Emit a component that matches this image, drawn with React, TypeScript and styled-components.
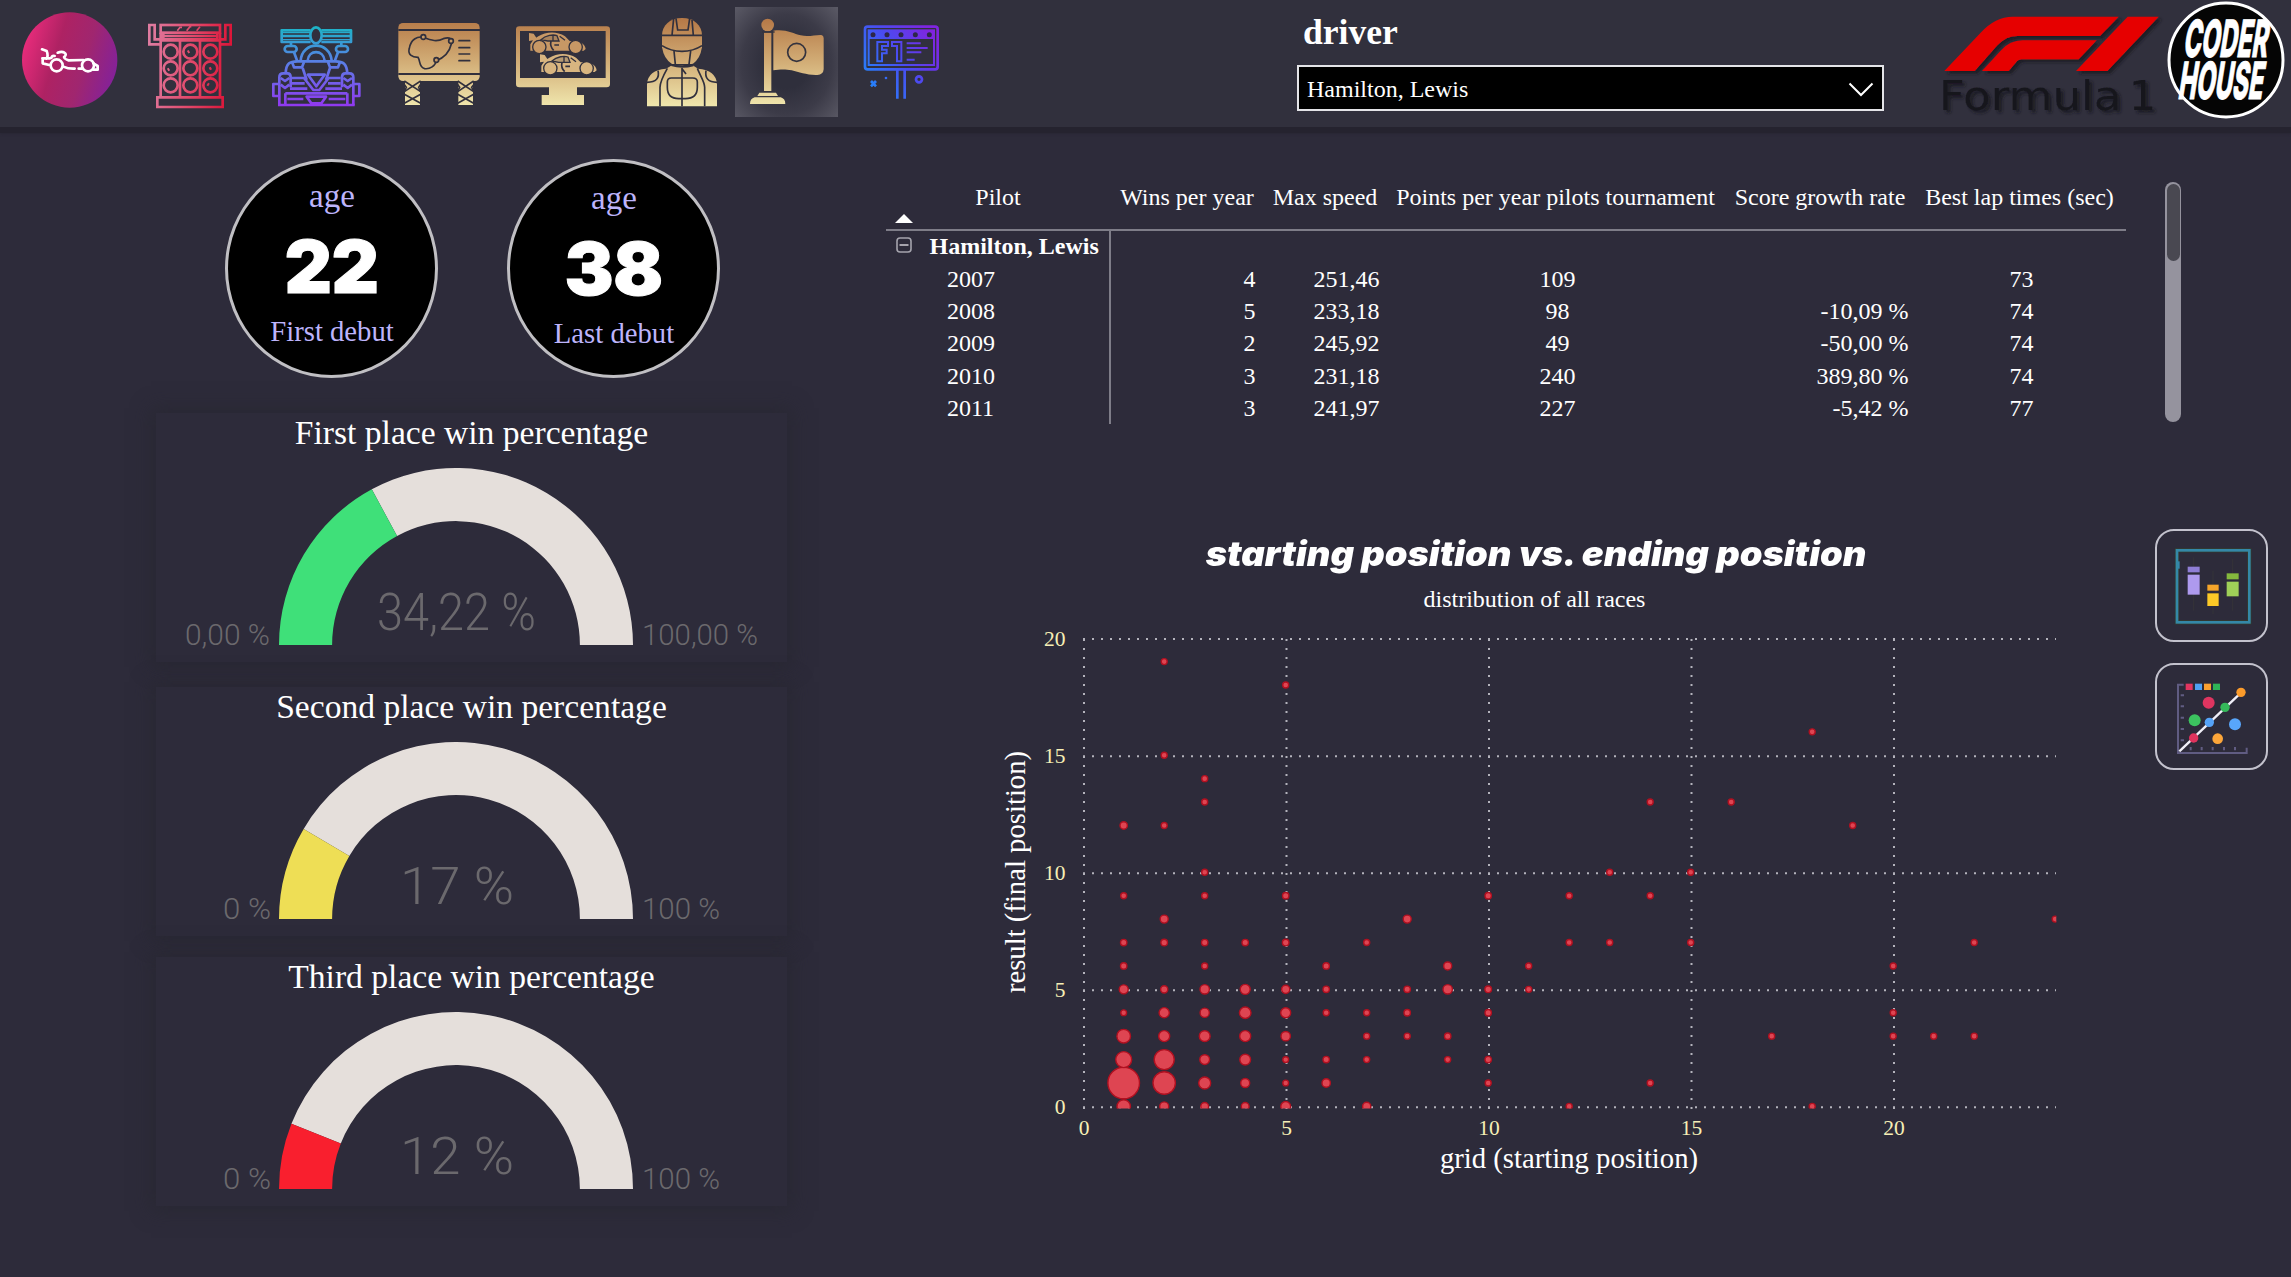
import React from "react";
import styled, { createGlobalStyle } from "styled-components";

const PAGE = "#2d2b3a";
const SERIF = '"Liberation Serif", "Times New Roman", serif';
const HEAVY = 'Inter, "Liberation Sans", sans-serif';
const DIN = 'Roboto, "Liberation Sans", sans-serif';

const GlobalStyle = createGlobalStyle`
  *, *::before, *::after { box-sizing: border-box; }
  body { margin: 0; background: ${PAGE}; }
  svg { display: block; flex: none; }
`;

const Page = styled.div`
  width: 2291px;
  height: 1277px;
  overflow: hidden;
  display: flex;
  flex-direction: column;
  background: ${PAGE};
  color: #fff;
  font-family: ${SERIF};
`;

const Header = styled.header`
  height: 133px;
  flex: none;
  display: flex;
  align-items: flex-start;
  background: #31303d;
  border-bottom: 6px solid #25232f;
  box-shadow: 0 0 3px #25232f;
`;

const Nav = styled.nav`
  display: flex;
  align-items: flex-start;
  width: 1297px;
`;

const ActiveTile = styled.div`
  width: 103px;
  height: 110px;
  margin: 7px 22px 0 5px;
  background: radial-gradient(ellipse at 50% 52%, #2f2f3c 30%, #3c3b48 62%, #5b5a66 100%);
`;

const DriverFilter = styled.div`
  width: 587px;
  padding-top: 11px;
  margin-right: 16px;
`;

const FilterLabel = styled.div`
  height: 54px;
  padding-left: 6px;
  font-size: 35.6px;
  font-weight: 700;
  line-height: 42px;
`;

const Select = styled.div`
  height: 46px;
  display: flex;
  align-items: center;
  justify-content: space-between;
  padding: 2px 8px 0 8px;
  border: 2px solid #e4e4e8;
  background: #000;
  font-size: 24px;
  line-height: 40px;
`;

const Body = styled.main`
  flex: 1;
  display: flex;
`;

const LeftColumn = styled.section`
  width: 886px;
  padding: 26px 0 0 156px;
`;

const Kpis = styled.div`
  display: flex;
  gap: 69px;
  padding-left: 69px;
  margin-bottom: 35px;
`;

const Kpi = styled.div<{ $drop: number }>`
  width: 213px;
  height: 219px;
  border: 3.5px solid #c0bfc3;
  border-radius: 50%;
  background: #000;
  display: flex;
  flex-direction: column;
  align-items: center;
  padding-top: ${(p) => 15 + p.$drop}px;
`;

const KpiLabel = styled.div<{ $size: number; $height: number }>`
  color: #bdb4fb;
  font-size: ${(p) => p.$size}px;
  line-height: ${(p) => p.$height}px;
  padding-left: 1px;
  white-space: nowrap;
`;

const KpiValue = styled.div`
  font-family: ${HEAVY};
  font-weight: 900;
  font-size: 73.5px;
  line-height: 104px;
  height: 99px;
  letter-spacing: -0.5px;
  -webkit-text-stroke: 1px #fff;
`;

const Cards = styled.div`
  display: flex;
  flex-direction: column;
`;

const Card = styled.article<{ $gap: number }>`
  width: 631px;
  height: 249px;
  margin-bottom: ${(p) => p.$gap}px;
  background: ${PAGE};
  box-shadow: 0 0 18px 5px rgba(38, 38, 47, 0.6);
`;

const CardTitle = styled.h2`
  margin: 0;
  height: 55px;
  padding-top: 1px;
  font-size: 33.6px;
  font-weight: 400;
  line-height: 38px;
  text-align: center;
  white-space: nowrap;
`;

const RightColumn = styled.section`
  flex: 1;
  display: flex;
  flex-direction: column;
`;

const MatrixArea = styled.div`
  display: flex;
  height: 340px;
  padding-top: 31px;
`;

const Matrix = styled.div`
  width: 1240px;
  font-size: 24px;
  white-space: nowrap;
`;

const HEAD_COLUMNS = "224px 154px 122px 339px 190px 209px";
const COLUMNS = "225px 153px 124px 339px 190px 209px";

const MatrixHead = styled.div`
  display: grid;
  grid-template-columns: ${HEAD_COLUMNS};
  height: 67px;
  padding-top: 19px;
  border-bottom: 2px solid #7e7d88;
  line-height: 28px;
  text-align: center;
  position: relative;
`;

const SortMark = styled.svg`
  position: absolute;
  left: 9px;
  top: 50px;
`;

const MatrixRow = styled.div<{ $first?: boolean }>`
  display: grid;
  grid-template-columns: ${COLUMNS};
  height: ${(p) => (p.$first ? 32 : 32.2)}px;
  line-height: ${(p) => (p.$first ? 30.6 : 32.2)}px;
`;

const RowHead = styled.div<{ $bold?: boolean }>`
  display: flex;
  align-items: center;
  padding-left: ${(p) => (p.$bold ? 10 : 61)}px;
  padding-bottom: ${(p) => (p.$bold ? 2 : 0)}px;
  font-weight: ${(p) => (p.$bold ? 700 : 400)};
  border-right: 2px solid #7e7d88;
  svg { margin: -2px 17.5px 0 0; }
`;

const Cell = styled.div<{ $align: "right" | "center" }>`
  text-align: ${(p) => p.$align};
  padding-right: ${(p) => (p.$align === "right" ? 8.5 : 0)}px;
`;

const ScrollTrack = styled.div`
  width: 16px;
  height: 240px;
  margin: 18px 0 0 39px;
  border-radius: 8px;
  background: #95939e;
  padding: 1.5px;
`;

const ScrollThumb = styled.div`
  height: 77px;
  border-radius: 7px;
  background: #494851;
`;

const ChartArea = styled.div`
  display: flex;
  flex: 1;
  padding: 56px 0 0 104px;
`;

const ChartPanel = styled.div`
  width: 1092px;
`;

const ChartTitle = styled.h1`
  margin: 0;
  height: 56px;
  font-family: ${HEAVY};
  font-size: 34px;
  font-style: italic;
  font-weight: 900;
  line-height: 49px;
  text-align: center;
  white-space: nowrap;
  transform: scaleX(1.071);
`;

const ChartSubtitle = styled.div`
  height: 40px;
  padding-right: 3px;
  font-size: 24px;
  line-height: 28px;
  text-align: center;
`;

const SideButtons = styled.div`
  display: flex;
  flex-direction: column;
  gap: 21px;
  margin-left: 73px;
`;

const SideButton = styled.button<{ $height: number }>`
  width: 113px;
  height: ${(p) => p.$height}px;
  padding: 0 3px 0 0;
  border: 2px solid #c3c2cd;
  border-radius: 19px;
  background: transparent;
  display: flex;
  align-items: center;
  justify-content: center;
`;

/* ---------- header icons ---------- */

const GoldGradient = ({ id }: { id: string }) => (
  <linearGradient id={id} gradientUnits="userSpaceOnUse" x1="0" y1="60" x2="0" y2="320">
    <stop offset="0" stopColor="#b67a48" />
    <stop offset="0.5" stopColor="#d3af78" />
    <stop offset="1" stopColor="#f0e7ae" />
  </linearGradient>
);

const CarBadge = () => (
  <svg width="132" height="120" viewBox="0 0 396 360">
    <defs>
      <linearGradient id="badge" x1="0" y1="0.35" x2="1" y2="0.65">
        <stop offset="0" stopColor="#ea2c7c" />
        <stop offset="0.35" stopColor="#ae2263" />
        <stop offset="0.65" stopColor="#a0266f" />
        <stop offset="1" stopColor="#83219b" />
      </linearGradient>
    </defs>
    <circle cx="209" cy="180" r="143" fill="url(#badge)" />
    <g fill="none" stroke="#fff" strokeWidth="8" strokeLinejoin="round" strokeLinecap="round">
      <circle cx="170" cy="196" r="18" />
      <circle cx="264" cy="196" r="18" />
      <path d="M126 148 L140 153 Q146 168 139 176 M127 175 H150 M164 168 Q156 166 154 174 M128 176 V190 L148 195" />
      <path d="M173 158 Q186 153 193 158 Q202 164 192 171 Q194 178 206 181 L250 180 M190 200 Q205 207 224 206 M236 206 H246 M280 190 L293 198 V209 H280" />
    </g>
  </svg>
);

const TrafficLights = () => (
  <svg width="123" height="120" viewBox="396 0 369 360">
    <defs>
      <linearGradient id="lights" gradientUnits="userSpaceOnUse" x1="445" y1="180" x2="695" y2="200">
        <stop offset="0" stopColor="#df7ba0" />
        <stop offset="0.5" stopColor="#e24a6c" />
        <stop offset="1" stopColor="#dc1235" />
      </linearGradient>
    </defs>
    <g fill="none" stroke="url(#lights)" strokeWidth="8">
      <rect x="482" y="75" width="178" height="23" />
      <path d="M490 98 V118 H652 V98 M490 108 H652" />
      <path d="M482 133 H448 V75 H464 V118 H482 M660 133 H692 V75 H676 V118 H660" />
      <path d="M482 98 V290 M660 98 V290 M540 120 V290 M600 120 V290 M482 121 H660" />
      <path d="M532 92 l8 -10 h6 M560 92 l10 -12 h4 M590 92 l10 -12" strokeWidth="5" />
      {[155, 205, 256].map((y) =>
        [512, 571, 631].map((x) => <circle key={`${x}-${y}`} cx={x} cy={y} r="21" />)
      )}
      <path d="M563 157 l5 -3 M503 210 l5 -3 M628 207 l6 -3 M622 252 l5 3" strokeWidth="9" />
      <path d="M472 292 H668 V321 H472 Z" />
    </g>
  </svg>
);

const FrontCar = () => (
  <svg width="125" height="120" viewBox="765 0 375 360">
    <defs>
      <linearGradient id="front" gradientUnits="userSpaceOnUse" x1="0" y1="80" x2="0" y2="318">
        <stop offset="0" stopColor="#1cb4c6" />
        <stop offset="0.45" stopColor="#5a7ee6" />
        <stop offset="1" stopColor="#9138f0" />
      </linearGradient>
    </defs>
    <g fill="none" stroke="url(#front)" strokeWidth="8" strokeLinejoin="round">
      <path d="M932 91 H845 V126 H932 M845 108 H930 M964 91 H1053 V126 H964 M966 108 H1053" />
      <path d="M845 98 H930 M845 119 H930 M966 98 H1053 M966 119 H1053" strokeWidth="4" />
      <ellipse cx="948" cy="106" rx="17" ry="24" />
      <path d="M873 127 V138 M1024 127 V138 M882 157 L892 184 M1014 157 L1004 184" />
      <rect x="854" y="138" width="36" height="18" rx="9" />
      <rect x="1008" y="138" width="36" height="18" rx="9" />
      <path d="M902 182 C906 122 990 122 995 182 M923 182 C926 148 970 148 974 182" />
      <path d="M857 220 C858 190 870 184 892 184 H1006 C1030 184 1040 192 1042 220" />
      <path d="M876 186 L882 202 H906 L912 186 M984 186 L990 202 H1014 L1020 186" />
      <path d="M924 224 H974 L949 259 Z M908 204 L920 240 M990 204 L978 240" />
      <path d="M838 316 V232 Q838 220 850 220 H862 Q872 220 872 232 V262 M1060 316 V232 Q1060 220 1048 220 H1036 Q1026 220 1026 232 V262" />
      <path d="M836 252 H820 V288 H836 M1062 252 H1078 V288 H1062" />
      <path d="M842 234 L855 243 L868 234 M842 254 L855 264 L868 254 M1030 234 L1043 243 L1056 234 M1030 254 L1043 264 L1056 254" />
      <path d="M876 234 H912 L940 270 H958 L986 234 H1022 M876 250 H914 M984 250 H1022 M870 266 H922 M976 266 H1026 M856 280 H1042 M856 280 V314 M1042 280 V314 M862 297 H910 M986 297 H1036 M920 290 H978 L964 310 H934 Z M834 315 H1064" />
    </g>
  </svg>
);

const CircuitBoard = () => (
  <svg width="120" height="120" viewBox="1140 0 360 360">
    <defs><GoldGradient id="gold-board" /></defs>
    <rect x="1195" y="69" width="244" height="174" rx="14" fill="url(#gold-board)" />
    <path fill="url(#gold-board)" d="M1215 243 H1260 V315 H1215 Z M1375 243 H1419 V315 H1375 Z" />
    <g fill="none" stroke="#31303d" strokeWidth="5">
      <path d="M1195 90 H1440 M1195 222 H1440" strokeWidth="6" />
      <path d="M1228 145 C1232 118 1252 108 1270 112 C1295 122 1312 126 1330 116 C1350 110 1362 118 1354 132 C1348 158 1335 172 1309 182 C1306 198 1290 208 1274 206 C1256 202 1262 184 1254 172 C1236 172 1222 164 1228 145 Z" />
      <path d="M1377 122 H1409 M1377 143 H1409 M1377 162 H1409 M1377 182 H1409" strokeLinecap="round" />
      <g fill="#c99b66"><circle cx="1270" cy="111" r="7" /><circle cx="1353" cy="123" r="7" /><circle cx="1309" cy="180" r="7" /></g>
      <path d="M1213 243 L1262 275 M1262 243 L1213 275 M1213 283 L1262 310 M1262 283 L1213 310 M1373 243 L1421 275 M1421 243 L1373 275 M1373 283 L1421 310 M1421 283 L1373 310" />
      <path d="M1208 247 L1219 262 L1208 284 M1266 247 L1256 262 L1266 284 M1368 247 L1379 262 L1368 284 M1427 247 L1415 262 L1427 284" />
    </g>
  </svg>
);

const SmallCar = ({ x, y, tone }: { x: number; y: number; tone: string }) => (
  <g transform={`translate(${x} ${y})`}>
    <path fill={tone} d="M0 0 L14 2 L22 14 L16 18 L28 10 C50 -4 84 -6 108 10 L122 24 C150 24 168 30 170 48 L164 53 H4 V34 L12 22 L0 24 Z" />
    <g fill="none" stroke="#31303d" strokeWidth="4">
      <path d="M36 20 C50 6 74 4 84 8 L90 24 H56 Z M72 8 V24 M92 10 L108 22" fill="#31303d" fillOpacity="0.2" />
      <path d="M76 36 h14 M66 24 Q62 40 74 52" strokeWidth="5" />
      <circle cx="31" cy="42" r="20" fill={tone} />
      <circle cx="140" cy="42" r="20" fill={tone} />
    </g>
  </g>
);

const RaceScreen = () => (
  <svg width="130" height="120" viewBox="60 0 390 360">
    <defs><GoldGradient id="gold-screen" /></defs>
    <path fill="url(#gold-screen)" fillRule="evenodd" d="M118 79 H380 Q390 79 390 89 V252 Q390 262 380 262 H291 V285 H312 V315 H185 V285 H207 V262 H118 Q108 262 108 252 V89 Q108 79 118 79 Z M120 93 V234 H377 V93 Z" />
    <SmallCar x={147} y={99} tone="#c79865" />
    <SmallCar x={180} y={163} tone="#d8b580" />
  </svg>
);

const Pilot = () => (
  <svg width="100" height="120" viewBox="450 0 300 360">
    <defs><GoldGradient id="gold-pilot" /></defs>
    <g fill="url(#gold-pilot)">
      <path d="M546 106 C546 76 570 54 606 54 C642 54 666 76 666 106 V142 Q660 178 638 192 H576 Q552 178 546 142 Z" />
      <path d="M576 196 H638 L654 206 Q708 210 711 252 V319 H501 V252 Q504 210 558 206 Z" />
    </g>
    <g fill="none" stroke="#31303d" strokeWidth="5">
      <path d="M546 106 H666 M581 55 L576 106 M588 55 L593 90 H624 L629 55 M636 60 L640 106" />
      <path d="M546 137 C566 150 580 154 606 154 C632 154 646 150 666 137 M582 153 L586 193 M632 153 L627 193" />
      <path d="M574 195 Q606 204 640 195" strokeWidth="7" />
      <path d="M606 204 V319 M606 206 L618 222 M562 205 C548 230 540 245 540 262 V319 M652 205 C662 230 674 245 674 262 V319" />
      <path d="M606 234 H574 Q562 234 562 246 V262 Q562 296 596 296 H616 Q652 296 652 262 V246 Q652 234 638 234 Z" />
      <path d="M534 212 Q542 246 501 247 M678 212 Q672 246 711 247" />
    </g>
  </svg>
);

const FinishFlag = () => (
  <svg width="103" height="110" viewBox="765 21 309 330">
    <defs><GoldGradient id="gold-flag" /></defs>
    <g fill="url(#gold-flag)">
      <circle cx="863" cy="75" r="19" />
      <rect x="852" y="98" width="22" height="175" />
      <path d="M838 278 H888 L894 288 H832 Z M824 292 H902 Q916 296 916 312 H810 Q810 296 824 292 Z" />
      <path d="M880 92 C915 86 940 100 962 106 C985 112 1006 104 1024 105 Q1031 106 1031 114 V208 Q1030 224 1012 225 C980 226 958 216 935 211 C912 206 896 209 880 211 Z" />
    </g>
    <circle cx="950" cy="157" r="27" fill="none" stroke="#34333e" strokeWidth="5" />
    <path d="M846 96 H884" stroke="#34333e" strokeWidth="4" />
  </svg>
);

const Billboard = () => (
  <svg width="85" height="120" viewBox="1140 0 255 360">
    <defs>
      <linearGradient id="sign" gradientUnits="userSpaceOnUse" x1="1150" y1="230" x2="1350" y2="90">
        <stop offset="0" stopColor="#2583fa" />
        <stop offset="0.5" stopColor="#4a4cf0" />
        <stop offset="1" stopColor="#8024e0" />
      </linearGradient>
    </defs>
    <g fill="none" stroke="url(#sign)" strokeWidth="8">
      <rect x="1155" y="80" width="218" height="128" rx="8" />
      <rect x="1166" y="91" width="196" height="104" strokeWidth="6" />
      <path d="M1166 104 H1362" strokeWidth="26" />
      <path d="M1192 184 V126 H1224 V138 H1206 V149 H1220 V160 H1206 V184 Z M1236 138 V126 H1264 V184 H1251 V138 Z" strokeWidth="6" />
      <path d="M1280 130 H1322 M1280 144 H1343 M1280 157 H1324 M1280 179 H1304" strokeWidth="6" />
      <path d="M1252 210 V296 M1274 210 V296 M1173 243 L1188 259 M1188 243 L1173 259" />
      <circle cx="1317" cy="238" r="9" />
      <circle cx="1218" cy="234" r="2" strokeWidth="4" />
    </g>
    <g fill="#2d2748">
      {[1179, 1221, 1263, 1306, 1348].map((x) => <circle key={x} cx={x} cy="104" r="7.5" />)}
    </g>
  </svg>
);

const Logos = () => (
  <svg width="391" height="120" viewBox="0 0 1173 360">
    <defs>
      <filter id="logo-shadow" x="-10%" y="-10%" width="125%" height="130%">
        <feDropShadow dx="9" dy="8" stdDeviation="4" floodColor="#14131a" floodOpacity="0.85" />
      </filter>
    </defs>
    <g fill="#e60400" filter="url(#logo-shadow)">
      <path d="M133 213 L242 98 Q286 50 338 50 H656 L600 108 H352 Q318 108 292 136 L224 213 Z" />
      <path d="M246 213 L302 152 Q330 121 368 121 H590 L536 178 H366 Q355 178 347 188 L326 213 Z" />
      <path d="M528 213 L683 50 H776 L622 213 Z" />
    </g>
    <g filter="url(#logo-shadow)" fill="#17161e" fontFamily='"DejaVu Sans", sans-serif' fontSize="120">
      <text x="116" y="331" textLength="548" lengthAdjust="spacingAndGlyphs">Formula</text>
      <text x="686" y="331" textLength="82" lengthAdjust="spacingAndGlyphs">1</text>
    </g>
    <circle cx="978" cy="180" r="171" fill="#050505" stroke="#fff" strokeWidth="9" />
    <g transform="translate(978 180) skewX(-9)" fill="#fff" stroke="#fff" strokeWidth="3" fontFamily={HEAVY} fontWeight="800" fontSize="154">
      <text x="-132" y="-9" textLength="252" lengthAdjust="spacingAndGlyphs">CODER</text>
      <text x="-128" y="116" textLength="254" lengthAdjust="spacingAndGlyphs">HOUSE</text>
    </g>
  </svg>
);

/* ---------- gauges ---------- */

interface GaugeData {
  title: string;
  share: number;
  color: string;
  value: string;
  valueBox: [number, number];
  min: string;
  minBox: [number, number];
  max: string;
  maxWidth: number;
  gap: number;
}

const GAUGES: GaugeData[] = [
  { title: "First place win percentage", share: 0.3422, color: "#3fe079", value: "34,22 %", valueBox: [221, 159], min: "0,00 %", minBox: [29, 85], max: "100,00 %", maxWidth: 116, gap: 25 },
  { title: "Second place win percentage", share: 0.17, color: "#eede55", value: "17 %", valueBox: [244, 114], min: "0 %", minBox: [67, 48], max: "100 %", maxWidth: 78, gap: 21 },
  { title: "Third place win percentage", share: 0.12, color: "#f91f2e", value: "12 %", valueBox: [244, 114], min: "0 %", minBox: [67, 48], max: "100 %", maxWidth: 78, gap: 0 },
];

const CX = 300;
const CY = 177;

function ring(from: number, to: number): string {
  const R = 177;
  const r = 123.9;
  const at = (radius: number, t: number) =>
    `${CX - radius * Math.cos(Math.PI * t)} ${CY - radius * Math.sin(Math.PI * t)}`;
  return `M${at(R, from)} A${R} ${R} 0 0 1 ${at(R, to)} L${at(r, to)} A${r} ${r} 0 0 0 ${at(r, from)} Z`;
}

const Gauge = ({ g }: { g: GaugeData }) => (
  <Card $gap={g.gap}>
    <CardTitle>{g.title}</CardTitle>
    <svg width="631" height="190" viewBox="0 0 631 190">
      <path d={ring(g.share, 1)} fill="#e5dfdb" />
      <path d={ring(0, g.share)} fill={g.color} />
      <g fill="#6b696d" fontFamily={DIN} fontWeight="300">
        <text x={g.valueBox[0]} y="162" fontSize="52" textLength={g.valueBox[1]} lengthAdjust="spacingAndGlyphs">{g.value}</text>
        <text x={g.minBox[0]} y="177" fontSize="29" textLength={g.minBox[1]} lengthAdjust="spacingAndGlyphs">{g.min}</text>
        <text x="486" y="177" fontSize="29" textLength={g.maxWidth} lengthAdjust="spacingAndGlyphs">{g.max}</text>
      </g>
    </svg>
  </Card>
);

/* ---------- matrix ---------- */

const HEADINGS = ["Pilot", "Wins per year", "Max speed", "Points per year pilots tournament", "Score growth rate", "Best lap times (sec)"];
const ROWS = [
  ["2007", "4", "251,46", "109", "", "73"],
  ["2008", "5", "233,18", "98", "-10,09 %", "74"],
  ["2009", "2", "245,92", "49", "-50,00 %", "74"],
  ["2010", "3", "231,18", "240", "389,80 %", "74"],
  ["2011", "3", "241,97", "227", "-5,42 %", "77"],
];

/* ---------- scatter ---------- */

/* [grid, result, radius] */
const S = 3.5;
const POINTS: [number, number, number][] = [
  [1, 0, 7.2], [2, 0, 5], [3, 0, 4.4], [4, 0, 4.4], [5, 0, 5.4], [7, 0, 4.6], [12, 0, S], [18, 0, S],
  [1, 1, 16.3], [2, 1, 11.7], [3, 1, 6.5], [4, 1, 5], [5, 1, 3.4], [6, 1, 4.7], [10, 1, S], [14, 1, S],
  [1, 2, 8.5], [2, 2, 10.5], [3, 2, 5.4], [4, 2, 5.9], [5, 2, 3.4], [6, 2, 3.7], [7, 2, S], [9, 2, S], [10, 2, 3.7],
  [1, 3, 7.3], [2, 3, 6], [3, 3, 5.9], [4, 3, 6], [5, 3, 5.2], [7, 3, S], [8, 3, S], [9, 3, 3.7], [17, 3, S], [20, 3, S], [21, 3, S], [22, 3, S],
  [1, 4, 3.4], [2, 4, 5.6], [3, 4, 5.1], [4, 4, 6.3], [5, 4, 5.5], [6, 4, S], [7, 4, S], [8, 4, 3.7], [10, 4, 3.7], [20, 4, S],
  [1, 5, 5], [2, 5, 4.1], [3, 5, 5.2], [4, 5, 5.5], [5, 5, 4.6], [6, 5, 3.7], [8, 5, 3.7], [9, 5, 5.2], [10, 5, 3.8], [11, 5, S],
  [1, 6, 3.7], [3, 6, S], [6, 6, 3.7], [9, 6, 4.5], [11, 6, S], [20, 6, S],
  [1, 7, 3.7], [2, 7, 3.8], [3, 7, 3.7], [4, 7, 3.7], [5, 7, 3.8], [7, 7, S], [12, 7, S], [13, 7, S], [15, 7, S], [22, 7, S],
  [2, 8, 4.5], [8, 8, 4.5], [24, 8, S],
  [1, 9, S], [3, 9, S], [5, 9, 3.7], [10, 9, 3.7], [12, 9, S], [14, 9, S],
  [3, 10, S], [13, 10, S], [15, 10, S],
  [1, 12, 4.2], [2, 12, S], [19, 12, S], [3, 13, S], [14, 13, S], [16, 13, S], [3, 14, S], [2, 15, S], [18, 16, S], [5, 18, S], [2, 19, S],
];

const px = (x: number) => 94 + x * 40.5;
const py = (y: number) => 482.3 - y * 23.41;

const Scatter = () => (
  <svg width="1092" height="560" viewBox="0 0 1092 560">
    <defs>
      <clipPath id="plot"><rect x="80" y="0" width="986.3" height="483.4" /></clipPath>
    </defs>
    <g stroke="#b4b3bc" strokeWidth="2" strokeDasharray="2 7">
      {[0, 5, 10, 15, 20].map((t) => (
        <React.Fragment key={t}>
          <line x1="93" x2="1066" y1={py(t)} y2={py(t)} />
          <line x1={px(t)} x2={px(t)} y1="14" y2="484" />
        </React.Fragment>
      ))}
    </g>
    <g clipPath="url(#plot)" fill="#de4552" stroke="#b01020" strokeWidth="1.4">
      {POINTS.map(([x, y, r]) => (
        <circle key={`${x}-${y}`} cx={px(x) - 0.8} cy={py(y) - 0.9} r={r - 0.5} />
      ))}
    </g>
    <g fill="#f6efb6" fontFamily={SERIF} fontSize="21.5">
      {[0, 5, 10, 15, 20].map((t) => (
        <React.Fragment key={t}>
          <text x="75.5" y={py(t) + 6.5} textAnchor="end">{t}</text>
          <text x={px(t)} y="510" textAnchor="middle">{t}</text>
        </React.Fragment>
      ))}
    </g>
    <g fill="#fff" fontFamily={SERIF} fontSize="28.7" textAnchor="middle">
      <text x="579" y="542.5">grid (starting position)</text>
      <text transform="translate(34.5 247) rotate(-90)">result (final position)</text>
    </g>
  </svg>
);

const BoxPlotIcon = () => (
  <svg width="84" height="84" viewBox="118 100 252 252">
    <g stroke="#353438" strokeWidth="3"><path d="M195 140 V300 M253 180 V310 M312 145 V300" /></g>
    <rect x="145" y="119" width="217" height="216" fill="none" stroke="#33402f" strokeWidth="12" />
    <rect x="145" y="119" width="217" height="216" fill="none" stroke="#3488a8" strokeWidth="8" />
    <path d="M150 152 V174" stroke="#3488a8" strokeWidth="6" />
    <path fill="#2d2b3a" d="M175 186 H214 V192 H175 Z M234 240 H272 V248 H234 Z M292 206 H332 V213 H292 Z" />
    <path fill="#8f7ed6" d="M177 168 H213 V185 H177 Z" />
    <path fill="#ae9aee" d="M177 192 H213 V252 H177 Z" />
    <path fill="#f5a52a" d="M236 222 H270 V240 H236 Z" />
    <path fill="#fcc927" d="M236 248 H270 V286 H236 Z" />
    <path fill="#84b93d" d="M294 188 H330 V206 H294 Z" />
    <path fill="#9fd058" d="M294 213 H330 V257 H294 Z" />
  </svg>
);

const ScatterIcon = () => (
  <svg width="84" height="84" viewBox="118 492 252 252">
    <path d="M165 521 H148 V726 H354 V710 M156 553 h10 M156 586 h10 M156 620 h10 M156 654 h10 M156 688 h10 M186 708 v10 M219 708 v10 M252 708 v10 M286 708 v10 M319 708 v10" fill="none" stroke="#605c82" strokeWidth="6" />
    <path d="M152 721 L338 544" stroke="#f0eff8" strokeWidth="7" />
    <path fill="#e23560" d="M171 518 h21 v19 h-21z" />
    <path fill="#4ea0f2" d="M199 518 h21 v19 h-21z" />
    <path fill="#f9a02f" d="M226 518 h21 v19 h-21z" />
    <path fill="#2fb457" d="M253 518 h21 v19 h-21z" />
    <circle cx="240" cy="575" r="18" fill="#df3560" />
    <circle cx="198" cy="628" r="18" fill="#3cc35f" />
    <circle cx="319" cy="640" r="18" fill="#58a6fb" />
    <circle cx="267" cy="683" r="16" fill="#fca63a" />
    <circle cx="337" cy="544" r="14" fill="#fb9b2b" />
    <circle cx="289" cy="589" r="14" fill="#35b95a" />
    <circle cx="242" cy="634" r="14" fill="#55a3f8" />
    <circle cx="195" cy="681" r="14" fill="#df335d" />
  </svg>
);

export default function App() {
  return (
    <>
      <GlobalStyle />
      <Page>
        <Header>
          <Nav>
            <CarBadge />
            <TrafficLights />
            <FrontCar />
            <CircuitBoard />
            <RaceScreen />
            <Pilot />
            <ActiveTile><FinishFlag /></ActiveTile>
            <Billboard />
          </Nav>
          <DriverFilter>
            <FilterLabel>driver</FilterLabel>
            <Select>
              Hamilton, Lewis
              <svg width="26" height="16" viewBox="0 0 26 16">
                <path d="M1.5 2.5 L13 14 L24.5 2.5" fill="none" stroke="#fff" strokeWidth="2" />
              </svg>
            </Select>
          </DriverFilter>
          <Logos />
        </Header>
        <Body>
          <LeftColumn>
            <Kpis>
              <Kpi $drop={0}>
                <KpiLabel $size={33} $height={38}>age</KpiLabel>
                <KpiValue>22</KpiValue>
                <KpiLabel $size={28.7} $height={34}>First debut</KpiLabel>
              </Kpi>
              <Kpi $drop={2}>
                <KpiLabel $size={33} $height={38}>age</KpiLabel>
                <KpiValue>38</KpiValue>
                <KpiLabel $size={28.7} $height={34}>Last debut</KpiLabel>
              </Kpi>
            </Kpis>
            <Cards>
              {GAUGES.map((g) => <Gauge key={g.title} g={g} />)}
            </Cards>
          </LeftColumn>
          <RightColumn>
            <MatrixArea>
              <Matrix>
                <MatrixHead>
                  {HEADINGS.map((h) => <div key={h}>{h}</div>)}
                  <SortMark width="18" height="9" viewBox="0 0 18 9"><path d="M0 9 L9 0 L18 9 Z" fill="#fff" /></SortMark>
                </MatrixHead>
                <MatrixRow $first>
                  <RowHead $bold>
                    <svg width="16" height="16" viewBox="0 0 16 16">
                      <rect x="1" y="1" width="14" height="14" rx="3" fill="none" stroke="#a5a4ad" strokeWidth="1.6" />
                      <path d="M3.5 8 H12.5" stroke="#c5c4cb" strokeWidth="1.6" />
                    </svg>
                    Hamilton, Lewis
                  </RowHead>
                </MatrixRow>
                {ROWS.map((row) => (
                  <MatrixRow key={row[0]}>
                    <RowHead>{row[0]}</RowHead>
                    <Cell $align="right">{row[1]}</Cell>
                    <Cell $align="right">{row[2]}</Cell>
                    <Cell $align="center">{row[3]}</Cell>
                    <Cell $align="right">{row[4]}</Cell>
                    <Cell $align="center">{row[5]}</Cell>
                  </MatrixRow>
                ))}
              </Matrix>
              <ScrollTrack><ScrollThumb /></ScrollTrack>
            </MatrixArea>
            <ChartArea>
              <ChartPanel>
                <ChartTitle>starting position vs. ending position</ChartTitle>
                <ChartSubtitle>distribution of all races</ChartSubtitle>
                <Scatter />
              </ChartPanel>
              <SideButtons>
                <SideButton $height={113}><BoxPlotIcon /></SideButton>
                <SideButton $height={107}><ScatterIcon /></SideButton>
              </SideButtons>
            </ChartArea>
          </RightColumn>
        </Body>
      </Page>
    </>
  );
}
